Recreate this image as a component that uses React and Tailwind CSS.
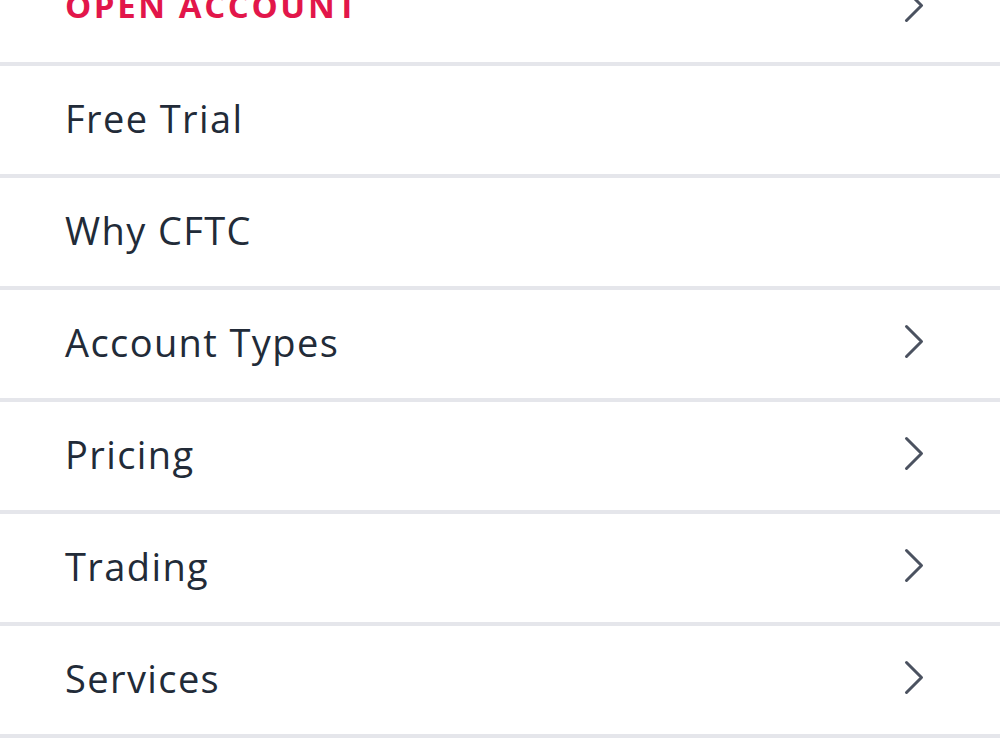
import React from 'react';

const items = [
  { label: 'OPEN ACCOUNT', highlight: true, arrow: true },
  { label: 'Free Trial', arrow: false },
  { label: 'Why CFTC', arrow: false },
  { label: 'Account Types', arrow: true },
  { label: 'Pricing', arrow: true },
  { label: 'Trading', arrow: true },
  { label: 'Services', arrow: true },
];

const Chevron = () => (
  <svg width="20" height="35" viewBox="0 0 20 35" fill="none" className="mb-[6px] shrink-0">
    <polyline
      points="2.5,2.5 17.5,17.5 2.5,32.5"
      stroke="#4b5260"
      strokeWidth="3"
      strokeLinecap="round"
      strokeLinejoin="round"
    />
  </svg>
);

const App = () => {
  return (
    <div className="h-[751px] w-[1000px] overflow-hidden bg-white font-['Open_Sans',sans-serif]">
      {/* mobile nav drawer, scrolled a little */}
      <ul className="-mt-[46px]">
        {items.map((item) => (
          <li
            key={item.label}
            className="flex h-[112px] items-center justify-between border-b-4 border-[#e5e6eb] pl-[65px] pr-[76px]"
          >
            <span
              className={
                item.highlight
                  ? 'pb-[4px] text-[33px] font-bold tracking-[2.6px] text-[#e2164a]'
                  : 'pb-[4px] text-[38px] tracking-[1.4px] text-[#222b38]'
              }
            >
              {item.label}
            </span>
            {item.arrow && <Chevron />}
          </li>
        ))}
      </ul>
    </div>
  );
};

export default App;
